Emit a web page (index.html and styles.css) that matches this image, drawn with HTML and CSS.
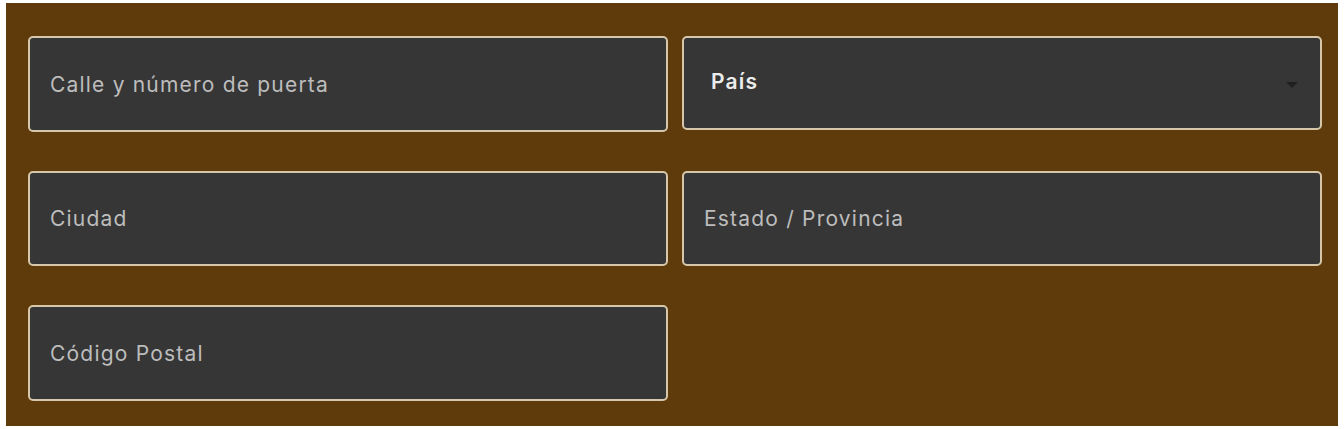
FILE: index.html
```html
<!DOCTYPE html>
<html lang="es">
<head>
<meta charset="utf-8">
<title>Dirección</title>
<link rel="stylesheet" href="styles.css">
</head>
<body>
<form class="panel">
  <div class="grid">
    <input class="field" type="text" placeholder="Calle y número de puerta">
    <div class="select">
      <span class="select-label">País</span>
      <svg class="caret" width="12" height="6" viewBox="0 0 12 6"><path d="M0 0H12L6 6Z" fill="#1f1f1f"/></svg>
    </div>
    <input class="field" type="text" placeholder="Ciudad">
    <input class="field" type="text" placeholder="Estado / Provincia">
    <input class="field" type="text" placeholder="Código Postal">
  </div>
</form>
</body>
</html>
```
FILE: styles.css
```css
html, body {
  margin: 0;
  padding: 0;
  background: #ffffff;
}
body {
  padding: 3px 6px;
  font-family: Inter, "Open Sans", sans-serif;
}
.panel {
  background: #5f3a0a;
  padding: 33px 16px 25px 22px;
}
.grid {
  display: grid;
  grid-template-columns: 640px 640px;
  column-gap: 14px;
  row-gap: 39px;
}
.field, .select {
  box-sizing: border-box;
  width: 640px;
  height: 96px;
  margin: 0;
  background: #363636;
  border: 2px solid #d6c7aa;
  border-radius: 5px;
  font-family: inherit;
  font-size: 21px;
  letter-spacing: 1.2px;
  color: #e6e6e6;
  padding: 0 20px;
  outline: none;
}
.field::placeholder {
  color: #bdbdbd;
  opacity: 1;
}
.field:nth-of-type(2), .field:nth-of-type(3) {
  height: 95px;
}
.select {
  height: 94px;
  display: flex;
  align-items: center;
  justify-content: space-between;
  padding: 0 22px 0 27px;
}
.select-label {
  font-weight: 600;
  color: #ececec;
  margin-top: -4px;
}
.caret {
  display: block;
  margin-top: 4px;
}
```
